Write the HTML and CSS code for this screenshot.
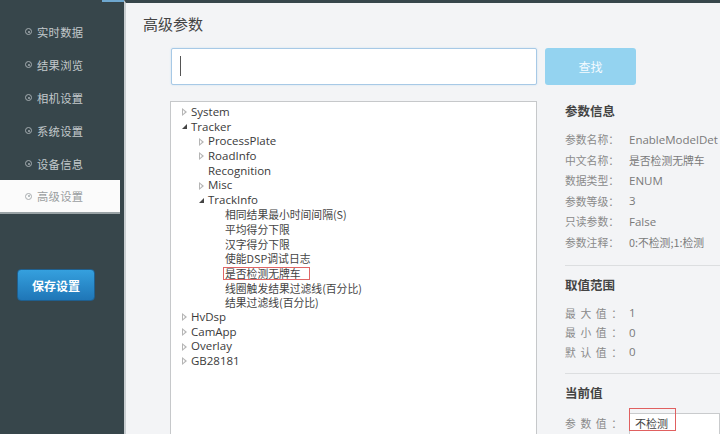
FILE: index.html
```html
<!DOCTYPE html>
<html lang="zh">
<head>
<meta charset="utf-8">
<link rel="stylesheet" href="styles.css">
</head>
<body>
<div class="app">
  <aside class="sidebar">
    <div class="topline"></div>
    <ul class="nav">
      <li class="nav-item"><span class="dot"></span>实时数据</li>
      <li class="nav-item"><span class="dot"></span>结果浏览</li>
      <li class="nav-item"><span class="dot"></span>相机设置</li>
      <li class="nav-item"><span class="dot"></span>系统设置</li>
      <li class="nav-item"><span class="dot"></span>设备信息</li>
      <li class="nav-item active"><span class="dot"></span>高级设置</li>
    </ul>
    <button class="save-btn">保存设置</button>
  </aside>
  <main class="main">
    <h1 class="title">高级参数</h1>
    <div class="search-row">
      <div class="search-input"><span class="caret"></span></div>
      <button class="search-btn">查找</button>
    </div>
    <div class="content">
      <div class="tree">
        <div class="node l1"><span class="tri closed"></span>System</div>
        <div class="node l1"><span class="tri open"></span>Tracker</div>
        <div class="node l2"><span class="tri closed"></span>ProcessPlate</div>
        <div class="node l2"><span class="tri closed"></span>RoadInfo</div>
        <div class="node l2"><span class="tri none"></span>Recognition</div>
        <div class="node l2"><span class="tri closed"></span>Misc</div>
        <div class="node l2"><span class="tri open"></span>TrackInfo</div>
        <div class="node l3 cn">相同结果最小时间间隔(S)</div>
        <div class="node l3 cn">平均得分下限</div>
        <div class="node l3 cn">汉字得分下限</div>
        <div class="node l3 cn">使能DSP调试日志</div>
        <div class="node l3 cn"><span class="mark">是否检测无牌车</span></div>
        <div class="node l3 cn">线圈触发结果过滤线(百分比)</div>
        <div class="node l3 cn">结果过滤线(百分比)</div>
        <div class="node l1"><span class="tri closed"></span>HvDsp</div>
        <div class="node l1"><span class="tri closed"></span>CamApp</div>
        <div class="node l1"><span class="tri closed"></span>Overlay</div>
        <div class="node l1"><span class="tri closed"></span>GB28181</div>
      </div>
      <div class="info">
        <h2 class="info-head">参数信息</h2>
        <div class="rows rows-a">
          <div class="row"><span class="lab">参数名称：</span><span class="val">EnableModelDet</span></div>
          <div class="row"><span class="lab">中文名称：</span><span class="val cnv">是否检测无牌车</span></div>
          <div class="row"><span class="lab">数据类型：</span><span class="val">ENUM</span></div>
          <div class="row"><span class="lab">参数等级：</span><span class="val">3</span></div>
          <div class="row"><span class="lab">只读参数：</span><span class="val">False</span></div>
          <div class="row"><span class="lab">参数注释：</span><span class="val cnv">0:不检测;1:检测</span></div>
        </div>
        <hr class="sep sep1">
        <h2 class="info-head head2">取值范围</h2>
        <div class="rows rows-b">
          <div class="row"><span class="lab wide">最大值：</span><span class="val">1</span></div>
          <div class="row"><span class="lab wide">最小值：</span><span class="val">0</span></div>
          <div class="row"><span class="lab wide">默认值：</span><span class="val">0</span></div>
        </div>
        <hr class="sep sep2">
        <h2 class="info-head head3">当前值</h2>
        <div class="row cur">
          <span class="lab wide">参数值：</span>
          <div class="cur-input"><span class="cur-mark">不检测</span></div>
        </div>
      </div>
    </div>
  </main>
</div>
</body>
</html>
```
FILE: styles.css
```css
* { box-sizing: border-box; }
html, body { margin: 0; padding: 0; }
body {
  width: 720px;
  height: 434px;
  overflow: hidden;
  font-family: "Open Sans", "Noto Sans CJK SC", sans-serif;
  background: #f3f4f6;
}
.app { display: flex; height: 434px; }

.sidebar {
  width: 124px;
  flex: none;
  background: #37464b;
  position: relative;
  padding-top: 15px;
}
.topline {
  position: absolute;
  top: 0; right: 0;
  width: 22px; height: 2px;
  background: #6ea7cf;
}
.nav { list-style: none; margin: 0; padding: 0; }
.nav-item {
  height: 33px;
  display: flex;
  align-items: center;
  padding-left: 25px;
  width: 120px;
  font-family: "Noto Sans CJK SC", sans-serif;
  font-size: 11.3px;
  color: #c3c9cc;
  letter-spacing: 0.3px;
}
.nav-item.active {
  background: #fbfbfb;
  color: #9a9ea0;
  border-bottom: 2px solid #9aa3a6;
  height: 34px;
}
.dot {
  width: 7px; height: 7px;
  border: 1px solid #a4acb0;
  border-radius: 50%;
  margin-right: 5px;
  position: relative;
}
.dot::after {
  content: "";
  position: absolute;
  left: 1.5px; top: 1.5px;
  width: 2px; height: 2px;
  border-radius: 50%;
  background: #a4acb0;
}
.active .dot { border-color: #a9adaf; }
.save-btn {
  display: block;
  margin: 55px 0 0 17px;
  width: 78px; height: 32px;
  border: 1px solid #1f5f8e;
  border-radius: 4px;
  background: linear-gradient(#35a0de, #1f76b7);
  color: #fff;
  font-family: "Noto Sans CJK SC", sans-serif;
  font-size: 12px;
  font-weight: bold;
  padding: 0;
}

.main {
  flex: 1;
  border-top: 3px solid #37464b;
  border-left: 2px solid #c9ced1;
  background: #f3f4f6;
}
.title {
  margin: 0;
  padding: 11px 0 0 17px;
  height: 45px;
  font-family: "Noto Sans CJK SC", sans-serif;
  font-size: 15px;
  font-weight: normal;
  color: #444;
  line-height: 20px;
}
.search-row {
  display: flex;
  gap: 8px;
  margin-left: 45px;
}
.search-input {
  width: 366px; height: 37px;
  background: #fff;
  border: 1px solid #a7c9e6;
  border-radius: 2px;
  box-shadow: 0 0 2px #c6def0;
  padding: 7px 0 0 8px;
}
.caret { display: block; width: 1px; height: 20px; background: #555; }
.search-btn {
  width: 91px; height: 37px;
  background: #94d3f0;
  border: none;
  border-radius: 3px;
  color: #f4fbff;
  font-family: "Noto Sans CJK SC", sans-serif;
  font-size: 12px;
  padding: 0;
}

.content {
  display: flex;
  margin-top: 16px;
  margin-left: 44px;
  height: 340px;
}
.tree {
  width: 367px;
  flex: none;
  background: #fff;
  border: 1px solid #c6c8ca;
  border-bottom: none;
  padding: 3px 0 0 0;
  font-size: 11.5px;
  color: #3a3a3a;
}
.node {
  height: 14.65px;
  line-height: 14.65px;
  display: flex;
  align-items: center;
  white-space: nowrap;
}
.l1 { padding-left: 10px; }
.l2 { padding-left: 27px; }
.l3 { padding-left: 54px; }
.cn { font-family: "Noto Sans CJK SC", sans-serif; font-size: 10.8px; color: #444; }
.tri { width: 9px; height: 9px; flex: none; position: relative; margin-right: 1px; }
.tri.closed::before {
  content: "";
  position: absolute;
  left: 1px; top: 0.5px;
  border-left: 5px solid #b5b5b5;
  border-top: 4px solid transparent;
  border-bottom: 4px solid transparent;
}
.tri.closed::after {
  content: "";
  position: absolute;
  left: 2px; top: 2.5px;
  border-left: 2.5px solid #fff;
  border-top: 2px solid transparent;
  border-bottom: 2px solid transparent;
}
.tri.open::before {
  content: "";
  position: absolute;
  left: 1px; top: 2px;
  border-right: 5px solid #444;
  border-top: 5px solid transparent;
}
.mark {
  display: inline-block;
  border: 1px solid #e06666;
  padding: 0 8px 0 1px;
  margin-left: -2px;
  height: 13px;
  line-height: 11px;
}

.info {
  flex: 1;
  padding-left: 28px;
  font-size: 12px;
}
.info-head {
  margin: 0;
  height: 20px;
  line-height: 20px;
  font-family: "Noto Sans CJK SC", sans-serif;
  font-size: 12.5px;
  font-weight: bold;
  color: #444;
}
.rows-a { margin-top: 8px; }
.rows-a .row { height: 20.5px; }
.rows-b { margin-top: 8px; }
.rows-b .row { height: 19.5px; }
.row { display: flex; align-items: center; }
.lab {
  width: 64px;
  flex: none;
  font-family: "Noto Sans CJK SC", sans-serif;
  font-size: 10.8px;
  color: #8a8a8a;
}
.lab.wide { letter-spacing: 4.6px; }
.val { color: #7a7a7a; font-size: 11.5px; }
.val.cnv { font-family: "Noto Sans CJK SC", sans-serif; font-size: 10.8px; }
.sep {
  border: none;
  border-top: 1px solid #dcdee0;
  margin: 0;
}
.sep1 { margin-top: 13px; }
.head2 { margin-top: 9px; }
.sep2 { margin-top: 11px; }
.head3 { margin-top: 9px; }
.cur { margin-top: 10px; align-items: flex-start; }
.cur .lab { line-height: 20px; }
.cur-input {
  position: relative;
  flex: 1;
  height: 28px;
  background: #fff;
  border: 1px solid #c9cbcd;
}
.cur-mark {
  position: absolute;
  left: -1px; top: -6px;
  width: 47px; height: 23px;
  border: 1px solid #e06060;
  font-family: "Noto Sans CJK SC", sans-serif;
  font-size: 11px;
  color: #444;
  line-height: 28px;
  padding-left: 5px;
  overflow: hidden;
}
```
